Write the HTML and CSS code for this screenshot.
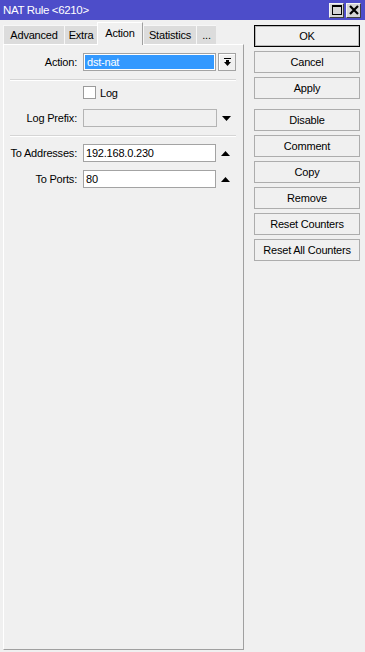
FILE: index.html
```html
<!DOCTYPE html>
<html>
<head>
<meta charset="utf-8">
<title>NAT Rule</title>
<link rel="stylesheet" href="styles.css">
</head>
<body>
<div class="window">
  <div class="titlebar">
    <span class="title">NAT Rule &lt;6210&gt;</span>
    <div class="tb-btns">
      <span class="tb-btn">
        <svg width="10" height="10" viewBox="0 0 10 10"><rect x="0.5" y="0.5" width="9" height="9" fill="none" stroke="#000" stroke-width="1"/><rect x="0" y="0" width="10" height="2" fill="#000"/></svg>
      </span>
      <span class="tb-btn">
        <svg width="10" height="10" viewBox="0 0 10 10"><path d="M1 1 L9 9 M9 1 L1 9" stroke="#000" stroke-width="2.2" fill="none"/></svg>
      </span>
    </div>
  </div>
  <div class="main">
    <div class="left">
      <div class="tabs">
        <div class="tab t-adv">Advanced</div>
        <div class="tab t-extra">Extra</div>
        <div class="tab t-action active">Action</div>
        <div class="tab t-stats">Statistics</div>
        <div class="tab t-more">...</div>
      </div>
      <div class="panel">
        <div class="row">
          <span class="lbl">Action:</span>
          <div class="field combo"><span class="sel">dst-nat</span></div>
          <span class="dd">
            <svg width="7" height="8" viewBox="0 0 7 8"><rect x="0" y="0" width="7" height="1" fill="#000"/><rect x="2" y="2" width="3" height="2" fill="#000"/><path d="M0 4 L7 4 L3.5 8 Z" fill="#000"/></svg>
          </span>
        </div>
        <div class="sep"></div>
        <div class="row check-row">
          <span class="checkbox"></span>
          <span class="check-label">Log</span>
        </div>
        <div class="row">
          <span class="lbl">Log Prefix:</span>
          <div class="field disabled wide"></div>
          <span class="arrow">
            <svg width="9" height="5" viewBox="0 0 9 5"><path d="M0 0 L9 0 L4.5 5 Z" fill="#000"/></svg>
          </span>
        </div>
        <div class="sep sep2"></div>
        <div class="row">
          <span class="lbl">To Addresses:</span>
          <div class="field">192.168.0.230</div>
          <span class="arrow up">
            <svg width="9" height="5" viewBox="0 0 9 5"><path d="M0 5 L9 5 L4.5 0 Z" fill="#000"/></svg>
          </span>
        </div>
        <div class="row row-gap">
          <span class="lbl">To Ports:</span>
          <div class="field">80</div>
          <span class="arrow up">
            <svg width="9" height="5" viewBox="0 0 9 5"><path d="M0 5 L9 5 L4.5 0 Z" fill="#000"/></svg>
          </span>
        </div>
      </div>
    </div>
    <div class="right">
      <div class="btn default">OK</div>
      <div class="btn">Cancel</div>
      <div class="btn">Apply</div>
      <div class="btn group-start">Disable</div>
      <div class="btn">Comment</div>
      <div class="btn">Copy</div>
      <div class="btn">Remove</div>
      <div class="btn">Reset Counters</div>
      <div class="btn">Reset All Counters</div>
    </div>
  </div>
</div>
</body>
</html>
```

FILE: styles.css
```css
* { box-sizing: border-box; }

body {
  margin: 0;
  background: #f0f0f0;
  font-family: "Liberation Sans", Arial, sans-serif;
  font-size: 11px;
  letter-spacing: -0.2px;
  color: #000;
}

.window {
  width: 365px;
  height: 652px;
  display: flex;
  flex-direction: column;
  background: #f0f0f0;
  overflow: hidden;
}

.titlebar {
  height: 20px;
  background: #4d4dc9;
  display: flex;
  align-items: center;
  justify-content: space-between;
  padding: 0 4px 0 3px;
}

.title {
  color: #fff;
  font-size: 11.5px;
  letter-spacing: -0.35px;
}

.tb-btns {
  display: flex;
  gap: 2px;
}

.tb-btn {
  width: 15px;
  height: 15px;
  background: #d6d6d6;
  border: 1px solid #f4f4f4;
  border-right-color: #404040;
  border-bottom-color: #404040;
  display: flex;
  align-items: center;
  justify-content: center;
}

.main {
  flex: 1;
  display: flex;
  padding: 2px 0 2px 3px;
  gap: 10px;
}

.left {
  width: 241px;
  display: flex;
  flex-direction: column;
}

.tabs {
  height: 22px;
  display: flex;
  align-items: flex-end;
}

.tab {
  height: 19px;
  background: #dcdcdc;
  border-left: 1px solid #f7f7f7;
  border-top: 1px solid #f7f7f7;
  text-align: center;
  line-height: 18px;
  padding: 0;
}

.t-adv { width: 61px; }
.t-extra { width: 33px; }
.t-action { width: 46px; }
.t-stats { width: 53px; }
.t-more { width: 20px; }

.tab.active {
  height: 23px;
  background: #f0f0f0;
  border-left: 1px solid #ffffff;
  border-top: 1px solid #ffffff;
  border-right: 1px solid #a0a0a0;
  line-height: 20px;
  margin-bottom: -1px;
  position: relative;
  z-index: 1;
}

.panel {
  flex: 1;
  border-top: 1px solid #ffffff;
  border-left: 1px solid #ffffff;
  border-right: 1px solid #a0a0a0;
  border-bottom: 1px solid #a0a0a0;
  padding-top: 8px;
}

.row {
  display: flex;
  align-items: center;
  height: 18px;
}

.row-gap {
  margin-top: 8px;
}

.lbl {
  width: 73px;
  margin-right: 6px;
  text-align: right;
  white-space: nowrap;
}

.field {
  width: 133px;
  height: 18px;
  border: 1px solid #a3a3a3;
  background: #ffffff;
  padding-left: 2px;
  line-height: 16px;
  white-space: nowrap;
}

.field.wide {
  width: 134px;
}

.field.disabled {
  background: #f0f0f0;
  border-color: #b4b4b4;
}

.combo {
  padding: 1px;
}

.sel {
  display: block;
  height: 100%;
  background: #3399ff;
  color: #fff;
  padding-left: 2px;
  line-height: 14px;
}

.dd {
  width: 18px;
  height: 18px;
  margin-left: 2px;
  border: 1px solid #a3a3a3;
  background: #f0f0f0;
  box-shadow: inset 1px 1px 0 #ffffff;
  display: flex;
  align-items: center;
  justify-content: center;
}

.arrow {
  display: flex;
  align-items: center;
  margin-left: 5px;
  height: 18px;
}

.sep {
  margin: 8px 7px 5px 6px;
  border-top: 1px solid #d5d5d5;
  border-bottom: 1px solid #ffffff;
}

.sep2 {
  margin-bottom: 7px;
}

.check-row {
  height: 13px;
  margin-bottom: 10px;
  padding-left: 79px;
}

.checkbox {
  width: 13px;
  height: 13px;
  border: 1px solid #9a9a9a;
  background: #ffffff;
}

.check-label {
  margin-left: 4px;
}

.right {
  width: 106px;
  padding-top: 3px;
  display: flex;
  flex-direction: column;
  gap: 4px;
}

.btn {
  height: 22px;
  border: 1px solid #adadad;
  background: #f0f0f0;
  text-align: center;
  line-height: 20px;
  white-space: nowrap;
}

.btn.default {
  border-color: #000;
  box-shadow: inset 0 0 0 1px #b8b8b8;
}

.btn.group-start {
  margin-top: 6px;
}
```
